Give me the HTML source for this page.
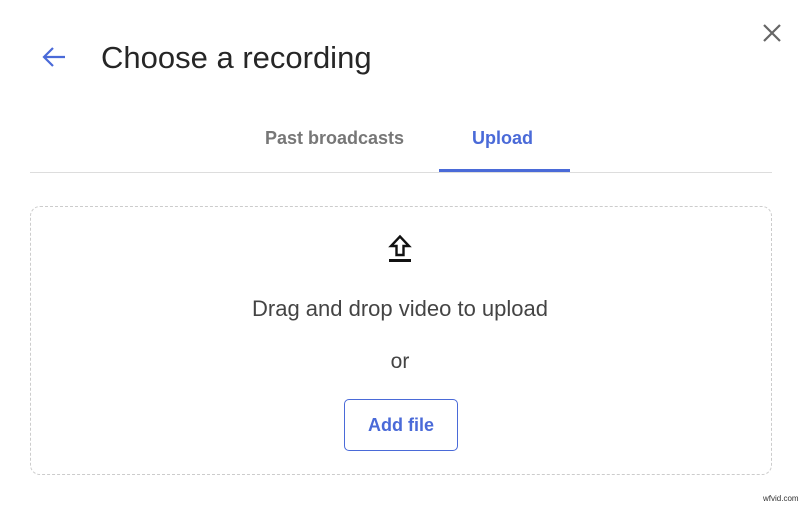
<!DOCTYPE html>
<html><head><meta charset="utf-8"><style>
*{margin:0;padding:0;box-sizing:border-box}
body{width:800px;height:506px;background:#fff;font-family:"Liberation Sans",sans-serif;position:relative;overflow:hidden}
.t{position:absolute;white-space:nowrap}
</style></head><body>
<svg style="position:absolute;left:40px;top:45px" width="28" height="24" viewBox="0 0 28 24"><path d="M25 12H4M13 3L4 12l9 9" fill="none" stroke="#4a6ad8" stroke-width="2.2"/></svg>
<div class="t" style="left:101px;top:40px;font-size:31px;color:#262626">Choose a recording</div>
<svg style="position:absolute;left:762px;top:23px" width="20" height="20" viewBox="0 0 20 20"><path d="M2 2L18 18M18 2L2 18" stroke="#666" stroke-width="2.2"/></svg>
<div class="t" style="left:265px;top:128px;font-size:18px;color:#777;font-weight:bold">Past broadcasts</div>
<div class="t" style="left:472px;top:128px;font-size:18px;color:#4a6ad8;font-weight:bold">Upload</div>
<div style="position:absolute;left:30px;top:172px;width:742px;height:1px;background:#ddd"></div>
<div style="position:absolute;left:439px;top:169px;width:131px;height:3px;background:#4a6ad8"></div>
<div style="position:absolute;left:30px;top:206px;width:742px;height:269px;border:1.5px dashed #ccc;border-radius:10px"></div>
<svg style="position:absolute;left:388px;top:234px" width="24" height="30" viewBox="0 0 24 30"><path d="M12 2.5L3 12h5.5v9h7v-9H21z" fill="none" stroke="#111" stroke-width="2.4" stroke-linejoin="miter"/><rect x="1" y="25" width="22" height="3" fill="#111"/></svg>
<div class="t" style="left:0;width:800px;text-align:center;top:296px;font-size:22px;color:#444">Drag and drop video to upload</div>
<div class="t" style="left:0;width:800px;text-align:center;top:350px;font-size:21px;color:#444">or</div>
<div style="position:absolute;left:344px;top:399px;width:114px;height:52px;border:1px solid #4a6ad8;border-radius:5px;color:#4a6ad8;font-size:18px;font-weight:bold;text-align:center;line-height:50px">Add file</div>
<div class="t" style="left:763px;top:494px;font-size:8px;color:#333">wfvid.com</div>
</body></html>
